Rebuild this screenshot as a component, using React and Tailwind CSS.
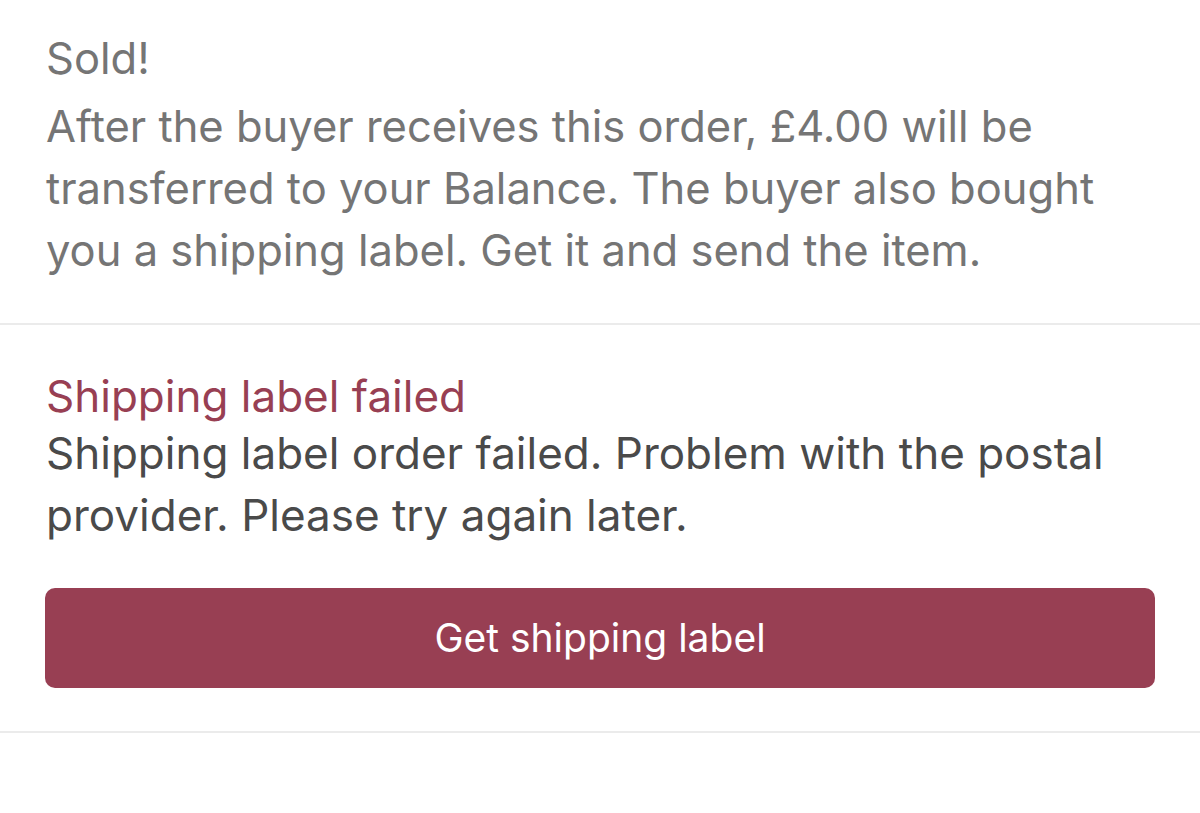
export default function App() {
  return (
    <div className="w-[1200px] h-[813px] bg-white overflow-hidden" style={{ fontFamily: "Inter, 'Noto Sans', sans-serif" }}>
      <div className="px-[46px] pt-[27px] pb-[42px]">
        <div className="text-[43.5px] leading-[62px] text-[#757575]">Sold!</div>
        <p className="mt-[6px] text-[43.5px] leading-[62px] text-[#757575]">
          After the buyer receives this order, £4.00 will be transferred to your Balance. The buyer also bought you a shipping label. Get it and send the item.
        </p>
      </div>
      <div className="h-[2px] bg-[#ebebeb]" />
      <div className="px-[46px] pt-[44px] pb-[43px]">
        <div className="text-[44px] leading-[54px] text-[#983f53]">Shipping label failed</div>
        <p className="-mt-[1px] text-[44px] leading-[62px] text-[#4a4a4a]">
          Shipping label order failed. Problem with the postal provider. Please try again later.
        </p>
        <button className="mt-[42px] w-[1110px] -ml-px h-[100px] rounded-[10px] bg-[#983f53] text-white text-[39px] flex items-center justify-center">
          Get shipping label
        </button>
      </div>
      <div className="h-[2px] bg-[#ebebeb]" />
    </div>
  );
}
